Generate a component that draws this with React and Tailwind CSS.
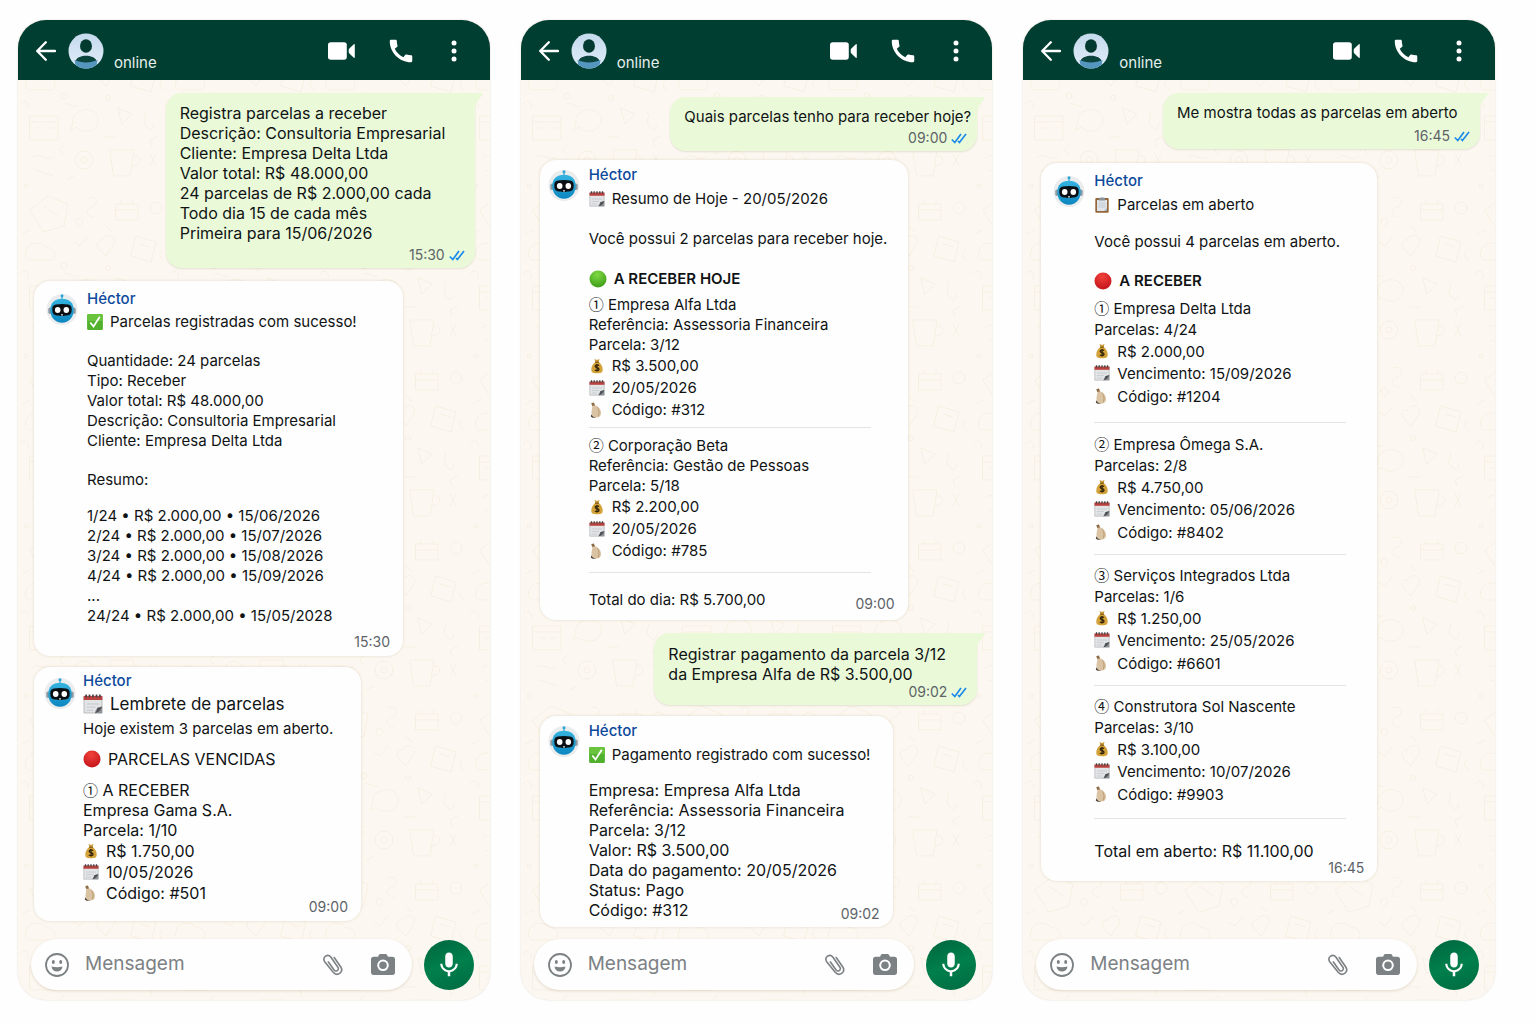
import { useId } from "react"
import { MdCall, MdMic } from "react-icons/md"

const BackIcon = () => (
  <svg viewBox="0 0 20 20" className="h-5 w-5" fill="none" stroke="currentColor" strokeWidth="2.300" strokeLinecap="round" strokeLinejoin="round">
    <path d="M19 10H1.500M9.800 1.300 1.200 10l8.600 8.700" />
  </svg>
)

const VideoIcon = () => (
  <svg viewBox="0 0 27 18" className="h-[18px] w-[27px]" fill="currentColor">
    <rect x="0" y="0.200" width="18.800" height="17.600" rx="2.800" />
    <path d="M26.800 2.800v12.400c0 .7-.5.900-1 .5l-4.400-4.200c-.5-.4-.7-.8-.7-1.400V7.900c0-.6.2-1 .7-1.400l4.400-4.200c.5-.4 1-.2 1 .5z" />
  </svg>
)

const DotsIcon = () => (
  <svg viewBox="0 0 6 22" className="h-[22px] w-1.5" fill="currentColor">
    <circle cx="3" cy="3" r="2.500" />
    <circle cx="3" cy="11" r="2.500" />
    <circle cx="3" cy="19" r="2.500" />
  </svg>
)

const PersonAvatar = () => {
  const id = useId()
  return (
    <svg viewBox="0 0 36 36" className="h-9 w-9 shrink-0">
      <defs>
        <linearGradient id={id} x1="0" y1="0" x2="0" y2="1">
          <stop offset="0" stopColor="#c3d9ec" />
          <stop offset="1" stopColor="#e3eefa" />
        </linearGradient>
        <clipPath id={id + "c"}>
          <circle cx="18" cy="18" r="17.500" />
        </clipPath>
      </defs>
      <g clipPath={`url(#${id}c)`}>
        <rect width="36" height="36" fill={`url(#${id})`} />
        <ellipse cx="18" cy="13" rx="6" ry="6.800" fill="#033a30" />
        <path d="M7.500 27.500c1.500-3.300 6-4.800 10.500-4.800s9 1.500 10.500 4.800l-4 4h-13z" fill="#0a443d" />
        <path d="M6.500 27c7 3.300 16 3.300 23 0L28 36H8z" fill="#5596be" />
      </g>
    </svg>
  )
}

const RobotAvatar = () => {
  const id = useId()
  return (
    <svg viewBox="0 0 32 32" className="h-8 w-8 shrink-0">
      <defs>
        <linearGradient id={id} x1="0" y1="0" x2="0" y2="1">
          <stop offset="0" stopColor="#35b4e0" />
          <stop offset="1" stopColor="#0c86c0" />
        </linearGradient>
      </defs>
      <circle cx="16" cy="16.500" r="15.500" fill="#eaecee" />
      <path d="M16 3v4" stroke="#2aa5d6" strokeWidth="1.200" />
      <circle cx="16" cy="2.800" r="1.500" fill="#2aa5d6" />
      <rect x="2.300" y="14.500" width="3.500" height="6.500" rx="1.700" fill="#8f9ba4" />
      <rect x="26.200" y="14.500" width="3.500" height="6.500" rx="1.700" fill="#8f9ba4" />
      <path d="M16 5.800c7.500 0 11.700 4.200 11.700 11.200S23 29.800 16 29.800 4.300 24 4.300 17 8.500 5.800 16 5.800z" fill={`url(#${id})`} />
      <path d="M10 11.500c4-.7 8-.7 12 0 2.800.5 3.700 1.800 3.700 4.800 0 4.300-1.400 6.200-4.700 6.200-2 0-3 .6-5 .6s-3-.6-5-.6c-3.300 0-4.700-1.900-4.700-6.200 0-3 .9-4.300 3.700-4.800z" fill="#0b0f14" />
      <ellipse cx="11.700" cy="17" rx="2.800" ry="3" fill="#fff" />
      <ellipse cx="20.300" cy="17" rx="2.800" ry="3" fill="#fff" />
      <circle cx="16" cy="21.800" r=".9" fill="#e8f6fc" />
    </svg>
  )
}

const CheckEmoji = () => (
  <svg viewBox="0 0 16 16" className="h-4 w-4 shrink-0">
    <rect x="0.100" y="0.100" width="15.800" height="15.800" rx="1.500" fill="#52b12c" />
    <rect x="0.100" y="0.100" width="15.800" height="7" rx="1.500" fill="#69c33d" />
    <path d="m3.300 8.500 3.200 4L12.800 2.800" fill="none" stroke="#fff" strokeWidth="1.800" />
  </svg>
)

const CalendarEmoji = ({ className = "h-4 w-4" }) => (
  <svg viewBox="0 0 16 16" className={`shrink-0 ${className}`}>
    <path d="M.8 2h14.400v13.200H.8z" fill="#e2e4e6" stroke="#a8acaf" strokeWidth=".6" />
    <path d="M.5 1.500h15v3.300H.5z" fill="#b9423f" />
    <path d="M2.500.3v2.200M5.200.3v2.200M8 .3v2.200M10.800.3v2.200M13.500.3v2.200" stroke="#3f4246" strokeWidth="1.300" />
    <path d="M3 8h10M3 10.500h7M3 13h5" stroke="#c5c9cd" strokeWidth=".8" />
    <path d="M9.500 15.300c.3-3 2.500-5 5.800-5.300v5.300z" fill="#8f9296" />
    <path d="M9.500 15.300c2.800-.6 4.800-2.300 5.800-5.300-1.500.8-2.500 1-4 .9.100 1.800-.5 3-1.800 4.400z" fill="#4d5054" />
  </svg>
)

const ClipboardEmoji = () => (
  <svg viewBox="0 0 16 16" className="h-4 w-4 shrink-0">
    <rect x="1.300" y="1" width="13.400" height="14.700" rx="1" fill="#94673b" />
    <path d="M3 3h10v11H3z" fill="#dfe5ea" />
    <path d="M4.500 6h7M4.500 8h7M4.500 10h7" stroke="#b8c2ca" strokeWidth=".7" />
    <path d="M10 14h3v-3z" fill="#a9b3ba" />
    <path d="M5 .8h1.800C7 0 9 0 9.200.8H11v2.700H5z" fill="#8b9197" />
  </svg>
)

const BallEmoji = ({ from, to }) => {
  const id = useId()
  return (
    <svg viewBox="0 0 18 18" className="h-[18px] w-[18px] shrink-0">
      <defs>
        <radialGradient id={id} cx=".45" cy=".25" r=".75">
          <stop offset="0" stopColor={from} />
          <stop offset="1" stopColor={to} />
        </radialGradient>
      </defs>
      <circle cx="9" cy="9" r="8.500" fill={`url(#${id})`} />
    </svg>
  )
}

const MoneyEmoji = () => (
  <svg viewBox="0 0 16 16" className="h-4 w-4 shrink-0">
    <path d="M5.500 1 8 2l2.500-1-1 3.500h-3z" fill="#c99a35" />
    <path d="M6.300 4h3.400c2.300 1.500 4 4.500 4 7.500 0 2.800-1.200 3.800-5.700 3.800s-5.700-1-5.700-3.800c0-3 1.700-6 4-7.500z" fill="#d3a238" />
    <path d="M6 4.200h4" stroke="#7a5414" strokeWidth="1.100" />
    <path d="M10 7.600C8.800 6.400 6.200 6.800 6.200 8.300c0 1.900 3.800 1 3.800 2.900 0 1.700-3 1.900-4.100.6M8 5.900v7.600" fill="none" stroke="#33240a" strokeWidth="1.300" />
  </svg>
)

const PouchEmoji = () => (
  <svg viewBox="0 0 16 16" className="h-4 w-4 shrink-0">
    <path d="M2.300 1.200 4.800.5 6 3.300c4 1.300 6 4.700 6 8 0 2.800-1.800 4.200-4.700 4.200-3 0-5-2-4.800-5C2.700 7.500 3.500 5.500 3.300 3.600z" fill="#d9c3a2" />
    <path d="M2.300 1.200 4.800.5 6 3.300l-2.700.6z" fill="#8d6c48" />
    <path d="M2.300 12.300c.8 2 2.200 3.200 5 3.200-2.200.7-4.500.4-5.500-1z" fill="#4a4038" />
    <path d="M8.500 5.500c1.700 2.500 2 5.500.8 8.800" fill="none" stroke="#b7966c" strokeWidth=".9" />
  </svg>
)

const TicksIcon = () => (
  <svg viewBox="0 0 16 11" className="h-[11px] w-4" fill="none" stroke="#1b8ae8" strokeWidth="1.700">
    <path d="m.8 6.500 3 3L10 1M7 8l1.400 1.500L15 1" />
  </svg>
)

const SmileIcon = () => (
  <svg viewBox="0 0 24 24" className="h-6 w-6 shrink-0" fill="none" stroke="#7c8184" strokeWidth="1.800">
    <circle cx="12" cy="12" r="11" />
    <path d="M6.500 13.500c3.500 1 7.500 1 11 0-.4 3.200-2.600 5-5.500 5s-5.100-1.800-5.500-5z" fill="#7c8184" stroke="none" />
    <ellipse cx="8.300" cy="9" rx="1.500" ry="1.900" fill="#7c8184" stroke="none" />
    <ellipse cx="15.700" cy="9" rx="1.500" ry="1.900" fill="#7c8184" stroke="none" />
  </svg>
)

const ClipIcon = () => (
  <svg viewBox="0 0 20 22" className="h-[22px] w-5" fill="none" stroke="#7c8184" strokeWidth="1.600" strokeLinecap="round" strokeLinejoin="round">
    <path d="m11.200 3.500 6.600 9.500c3.200 5.400-3.600 10-7.600 5.300L1.500 7.400C-.8 3.200 4.600-.9 7.800 3l7.100 10.200c1.600 3-2 5.200-4 2.600L5.400 8" />
  </svg>
)

const CameraIcon = () => (
  <svg viewBox="0 0 24 21" className="h-[21px] w-6">
    <path d="M7.800 1.200C8.200.5 8.700 0 9.500 0h5c.8 0 1.300.5 1.700 1.200L17 2.800h4.300A2.700 2.700 0 0 1 24 5.500v12.800a2.700 2.700 0 0 1-2.700 2.700H2.700A2.700 2.700 0 0 1 0 18.300V5.500a2.700 2.700 0 0 1 2.700-2.700H7z" fill="#7c8184" />
    <circle cx="12" cy="11.300" r="4.800" fill="none" stroke="#fff" strokeWidth="2" />
  </svg>
)

const Wallpaper = () => {
  const id = useId()
  return (
    <svg className="absolute inset-0 -z-10 h-full w-full" fill="none" stroke="#f7efe3" strokeWidth="1" strokeLinecap="round" strokeLinejoin="round">
      <defs>
        <pattern id={id} width="150" height="170" patternUnits="userSpaceOnUse">
          <path d="m12 20 18-14 20 8-4 22-20 6zM26 16l14 10M70 8c8-4 12 6 4 9s-6 10 2 10M98 14h22v16H98zM103 10v4M115 10v4M98 20h22" />
          <circle cx="138" cy="18" r="6" />
          <path d="M8 62c0-10 16-12 20-4 8-2 12 8 6 12H12c-4 0-6-4-4-8zM56 52l6 4 8-10M84 50c4-8 16-4 12 4l-8 12-8-8c-3-6 2-9 4-8zM118 46l20 6-5 20-20-6zM122 54l10 3" />
          <path d="M12 96h28v24H12zM12 102h28M18 108h6M30 108h6M60 92c10-6 22 0 20 10s-16 12-22 5l-6 4 3-8c-1-5 1-9 5-11zM100 88l14 6-10 10zM126 92c6 4-4 8 2 14s6 4 8-2" />
          <circle cx="66" cy="140" r="9" />
          <circle cx="66" cy="140" r="3" />
          <path d="M14 138c8-8 14 6 22-2M18 150l18 6M92 130h24l-4 26H96zM116 136c8-2 8 10-2 10M132 134l6 12M138 134l-6 12M48 160l8-4" />
          <path d="M58 30c4-4 8 0 6 4s-6 2-6-4zM4 44l8-4M88 36l6 6M46 84c6-2 8 4 14 2M2 84c4-6 10-2 8 4M86 118c4-4 8 2 12-2M144 60c-4 4-2 8 2 10M140 116l-8 4 2 6M46 126c-6 2-4 8 0 8" />
          <circle cx="46" cy="76" r="3" />
          <circle cx="8" cy="166" r="2" />
          <circle cx="90" cy="78" r="2.500" />
        </pattern>
      </defs>
      <rect width="100%" height="100%" fill={`url(#${id})`} stroke="none" />
    </svg>
  )
}

// ---- message parts ----

const Time = ({ className = "mt-1", children }) => (
  <time className={`flex items-center justify-end gap-1 text-sm leading-4 text-[#5d6367] ${className}`}>{children}</time>
)

const Sent = ({ className, time, timeClass, children }) => (
  <article className={`relative max-w-full self-end rounded-2xl rounded-tr-none bg-[#eafad9] pr-2.5 pb-[5px] pl-[14px] whitespace-nowrap shadow-[0_1px_2px_rgba(120,110,80,0.18)] ${className}`}>
    <svg viewBox="0 0 9 16" className="absolute top-0 -right-[8px] h-4 w-[9px]">
      <path d="M0 0h8c1 0 1.200.8.700 1.400L3 9c-1.200 1.800-2 4-2 7H0z" fill="#eafad9" />
    </svg>
    {children}
    <Time className={timeClass}>
      {time} <TicksIcon />
    </Time>
  </article>
)

const Received = ({ className, avatarClass = "mt-1", gapClass = "gap-[9px]", time, timeClass, children }) => (
  <article className={`max-w-full rounded-2xl bg-[#fefefe] pr-[13px] shadow-[0_0_3px_rgba(150,120,80,0.25)] ${className}`}>
    <div className={`flex items-start ${gapClass}`}>
      <div className={avatarClass}>
        <RobotAvatar />
      </div>
      <div className="min-w-0 flex-1">
        <h2 className="text-[15px] font-medium text-[#0d4a9c]">Héctor</h2>
        {children}
      </div>
    </div>
    <Time className={timeClass}>{time}</Time>
  </article>
)

const Row = ({ icon, className = "h-[22px]", children }) => (
  <p className={`flex items-center gap-[7px] ${className}`}>
    {icon}
    {children}
  </p>
)

const Num = ({ children }) => <span className="font-['Noto_Sans_CJK_JP',sans-serif] text-[15px] leading-none">{children}</span>

const Rule = ({ className }) => <hr className={`border-[#e3e4e5] ${className}`} />

const Phone = ({ className, children }) => {
  const inputId = useId()
  return (
    <section className="relative isolate flex min-w-0 flex-col overflow-hidden rounded-[28px] bg-[#fcf8f1] shadow-[0_0_2px_rgba(160,130,90,0.3)]">
      <Wallpaper />
      <header className="flex h-[60px] shrink-0 items-center bg-[#003e31] pt-0.5 pr-[33px] pl-[18px] text-white">
        <button aria-label="Voltar">
          <BackIcon />
        </button>
        <span className="ml-3">
          <PersonAvatar />
        </span>
        <span className="ml-2.5 self-end pb-[7px] text-[15px] leading-5 text-[#e6efec]">online</span>
        <div className="ml-auto flex items-center">
          <button aria-label="Chamada de vídeo">
            <VideoIcon />
          </button>
          <button aria-label="Ligar" className="ml-[31px]">
            <MdCall className="h-[30px] w-[30px]" />
          </button>
          <button aria-label="Mais opções" className="ml-[35px]">
            <DotsIcon />
          </button>
        </div>
      </header>
      <main className={`flex flex-1 flex-col items-start pr-[15px] text-[15px] leading-5 text-[#101314] ${className}`}>{children}</main>
      <footer className="flex items-center justify-between gap-3 pt-2 pr-4 pb-2.5 pl-[13px]">
        <div className="flex h-[51px] min-w-0 flex-1 items-center rounded-full bg-[#fefefe] pr-[17px] pl-[14px] shadow-[0_1px_3px_rgba(150,120,80,0.25)]">
          <label htmlFor={inputId} aria-label="Mensagem">
            <SmileIcon />
          </label>
          <input
            id={inputId}
            type="text"
            placeholder="Mensagem"
            className="ml-4 min-w-0 flex-1 bg-transparent text-[19px] outline-none placeholder:text-[#7c8184]"
          />
          <button aria-label="Anexar">
            <ClipIcon />
          </button>
          <button aria-label="Câmera" className="ml-7">
            <CameraIcon />
          </button>
        </div>
        <button
          aria-label="Gravar áudio"
          className="flex h-[50px] w-[50px] shrink-0 items-center justify-center rounded-full bg-linear-160 from-[#00663e] via-[#007f4c] to-[#006b42] text-white"
        >
          <MdMic className="h-[30px] w-[30px]" />
        </button>
      </footer>
    </section>
  )
}

const OpenItem = ({ number, company, parcel, value, due, code }) => (
  <div className="leading-[21px]">
    <p><Num>{number}</Num> {company}</p>
    <p>Parcelas: {parcel}</p>
    <Row icon={<MoneyEmoji />}>{value}</Row>
    <Row icon={<CalendarEmoji />} className="h-[22px]">Vencimento: {due}</Row>
    <Row icon={<PouchEmoji />} className="h-6">Código: {code}</Row>
  </div>
)

const TodayItem = ({ number, company, reference, parcel, value, date, code }) => (
  <div>
    <p><Num>{number}</Num> {company}</p>
    <p>Referência: {reference}</p>
    <p>Parcela: {parcel}</p>
    <Row icon={<MoneyEmoji />}>{value}</Row>
    <Row icon={<CalendarEmoji />}>{date}</Row>
    <Row icon={<PouchEmoji />}>Código: {code}</Row>
  </div>
)

export default function App() {
  return (
    <div className="grid min-h-screen grid-cols-3 gap-[31px] bg-[#fefefe] pt-5 pr-[41px] pb-6 pl-[18px] font-['Inter','Noto_Sans',sans-serif]">
      <Phone className="pt-[13px] pl-4">
        <Sent className="w-[309px] pt-2.5 text-base leading-5" time="15:30">
          <p>Registra parcelas a receber</p>
          <p>Descrição: Consultoria Empresarial</p>
          <p>Cliente: Empresa Delta Ltda</p>
          <p>Valor total: R$ 48.000,00</p>
          <p>24 parcelas de R$ 2.000,00 cada</p>
          <p>Todo dia 15 de cada mês</p>
          <p>Primeira para 15/06/2026</p>
        </Sent>

        <Received className="mt-[13px] w-[369px] pt-2 pb-1.5 pl-3" time="15:30" timeClass="mt-2">
          <Row icon={<CheckEmoji />} className="mt-[3px] h-5">Parcelas registradas com sucesso!</Row>
          <div className="mt-[19px]">
            <p>Quantidade: 24 parcelas</p>
            <p>Tipo: Receber</p>
            <p>Valor total: R$ 48.000,00</p>
            <p>Descrição: Consultoria Empresarial</p>
            <p>Cliente: Empresa Delta Ltda</p>
          </div>
          <p className="mt-[19px]">Resumo:</p>
          <div className="mt-4">
            <p>1/24 • R$ 2.000,00 • 15/06/2026</p>
            <p>2/24 • R$ 2.000,00 • 15/07/2026</p>
            <p>3/24 • R$ 2.000,00 • 15/08/2026</p>
            <p>4/24 • R$ 2.000,00 • 15/09/2026</p>
            <p>...</p>
            <p>24/24 • R$ 2.000,00 • 15/05/2028</p>
          </div>
        </Received>

        <Received className="mt-[11px] w-[327px] pt-1 pb-1.5 pl-2.5" time="09:00" timeClass="-mt-1" avatarClass="mt-1.5" gapClass="gap-[7px]">
          <Row icon={<CalendarEmoji className="h-5 w-5" />} className="mt-[3px] h-5 text-[17px]">Lembrete de parcelas</Row>
          <p className="mt-[5px]">Hoje existem 3 parcelas em aberto.</p>
          <div className="text-base leading-5">
            <Row icon={<BallEmoji from="#f0413a" to="#c4161c" />} className="mt-2.5 h-5">PARCELAS VENCIDAS</Row>
            <div className="mt-[11px]">
              <p><Num>①</Num> A RECEBER</p>
              <p>Empresa Gama S.A.</p>
              <p>Parcela: 1/10</p>
              <Row icon={<MoneyEmoji />} className="h-[21px]">R$ 1.750,00</Row>
              <Row icon={<CalendarEmoji />} className="h-[21px]">10/05/2026</Row>
              <Row icon={<PouchEmoji />} className="h-[21px]">Código: #501</Row>
            </div>
          </div>
        </Received>
      </Phone>

      <Phone className="pt-[17px] pl-[19px]">
        <Sent className="w-[307px] pt-2.5" time="09:00" timeClass="mt-[3px]">
          <p>Quais parcelas tenho para receber hoje?</p>
        </Sent>

        <Received className="mt-[9px] w-[368px] pt-[5px] pb-2 pl-2" time="09:00" timeClass="-mt-[14px]">
          <Row icon={<CalendarEmoji />} className="mt-1 h-5">Resumo de Hoje - 20/05/2026</Row>
          <p className="mt-5">Você possui 2 parcelas para receber hoje.</p>
          <Row icon={<BallEmoji from="#7fd944" to="#3f9e17" />} className="mt-5 h-5 font-semibold">A RECEBER HOJE</Row>
          <div className="mt-1.5">
            <TodayItem number="①" company="Empresa Alfa Ltda" reference="Assessoria Financeira" parcel="3/12" value="R$ 3.500,00" date="20/05/2026" code="#312" />
            <Rule className="mt-1.5 mr-6 mb-2" />
            <TodayItem number="②" company="Corporação Beta" reference="Gestão de Pessoas" parcel="5/18" value="R$ 2.200,00" date="20/05/2026" code="#785" />
            <Rule className="mt-2.5 mr-6 mb-[17px]" />
            <p>Total do dia: R$ 5.700,00</p>
          </div>
        </Received>

        <Sent className="mt-[13px] w-[323px] pt-[11px] text-base leading-5" time="09:02" timeClass="mt-0">
          <p>Registrar pagamento da parcela 3/12</p>
          <p>da Empresa Alfa de R$ 3.500,00</p>
        </Sent>

        <Received className="mt-[11px] w-[353px] pt-[5px] pb-[5px] pl-2" time="09:02" timeClass="-mt-[14px]">
          <Row icon={<CheckEmoji />} className="mt-1 h-5">Pagamento registrado com sucesso!</Row>
          <div className="mt-[15px] text-base leading-5">
            <p>Empresa: Empresa Alfa Ltda</p>
            <p>Referência: Assessoria Financeira</p>
            <p>Parcela: 3/12</p>
            <p>Valor: R$ 3.500,00</p>
            <p>Data do pagamento: 20/05/2026</p>
            <p>Status: Pago</p>
            <p>Código: #312</p>
          </div>
        </Received>
      </Phone>

      <Phone className="pt-[13px] pl-[18px]">
        <Sent className="w-[317px] pt-2.5" time="16:45" timeClass="mt-[5px]">
          <p>Me mostra todas as parcelas em aberto</p>
        </Sent>

        <Received className="mt-[14px] w-[336px] pt-2 pb-[5px] pl-3" time="16:45" timeClass="-mt-px">
          <Row icon={<ClipboardEmoji />} className="mt-1 h-5">Parcelas em aberto</Row>
          <p className="mt-[17px]">Você possui 4 parcelas em aberto.</p>
          <Row icon={<BallEmoji from="#f0413a" to="#c4161c" />} className="mt-[19px] h-5 font-semibold">A RECEBER</Row>
          <div className="mt-[7px]">
            <OpenItem number="①" company="Empresa Delta Ltda" parcel="4/24" value="R$ 2.000,00" due="15/09/2026" code="#1204" />
            <Rule className="mt-[14px] mr-[18px] mb-[11px]" />
            <OpenItem number="②" company="Empresa Ômega S.A." parcel="2/8" value="R$ 4.750,00" due="05/06/2026" code="#8402" />
            <Rule className="my-2.5 mr-[18px]" />
            <OpenItem number="③" company="Serviços Integrados Ltda" parcel="1/6" value="R$ 1.250,00" due="25/05/2026" code="#6601" />
            <Rule className="my-2.5 mr-[18px]" />
            <OpenItem number="④" company="Construtora Sol Nascente" parcel="3/10" value="R$ 3.100,00" due="10/07/2026" code="#9903" />
            <Rule className="mt-3 mr-[18px] mb-[22px]" />
            <p className="text-base leading-5">Total em aberto: R$ 11.100,00</p>
          </div>
        </Received>
      </Phone>
    </div>
  )
}
